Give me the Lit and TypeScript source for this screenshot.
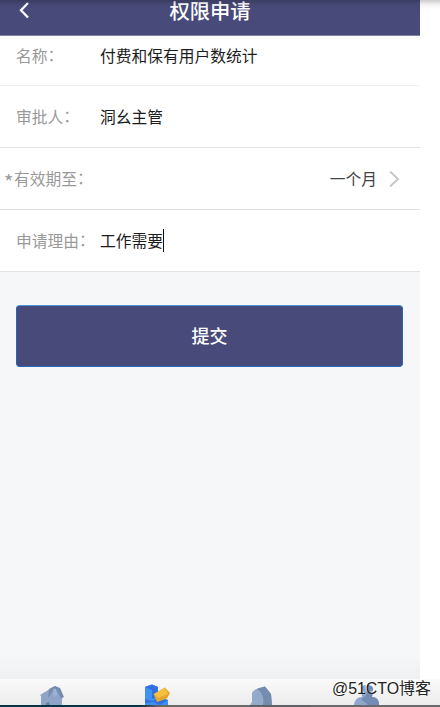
import { LitElement, html, css } from "lit";
import { customElement } from "lit/decorators.js";

@customElement("app-root")
export class AppRoot extends LitElement {
  static styles = css`
    :host {
      display: flex;
      flex-direction: column;
      position: relative;
      width: 440px;
      height: 707px;
      overflow: hidden;
      background: #fff;
      font-family: "Noto Sans CJK SC", sans-serif;
      font-size: 15.75px;
      line-height: 24px;
      color: #1c1c1c;
    }
    * { box-sizing: border-box; }
    svg { display: block; }
    .shade {
      position: absolute;
      inset: 0 0 auto 0;
      height: 10px;
      background: linear-gradient(rgba(0, 0, 0, 0.2), rgba(0, 0, 0, 0.04) 50%, transparent);
    }
    .screen {
      width: 420px;
      height: 679px;
      background: linear-gradient(#f5f7f9 655px, #eef0f2);
    }
    .header {
      display: grid;
      grid-template-columns: 50px 1fr 50px;
      height: 36px;
      background: #484b79;
      border-bottom: 1px solid #8385a5;
      color: #fff;
    }
    .back { margin: 1px 0 0 18px; }
    .title {
      text-align: center;
      font-size: 20.3px;
      font-weight: 500;
      line-height: 20px;
      white-space: nowrap;
    }
    .row {
      display: flex;
      align-items: center;
      height: 62px;
      padding: 0 20px 0 16px;
      border-bottom: 1px solid #e3e3e3;
      background: #fff;
      white-space: nowrap;
    }
    .first { height: 50px; padding-bottom: 10px; border-color: #f0f0f0; }
    .label { display: flex; width: 84px; color: #999; }
    .colon { margin-top: -1px; }
    .required { margin-left: -12px; width: 96px; }
    .star { width: 10px; font-size: 20px; line-height: 30px; height: 24px; }
    .value { display: flex; align-items: center; }
    .caret { width: 1px; height: 23px; background: #111; }
    .choice { margin-left: auto; color: #444; }
    .arrow { margin-left: 11px; }
    .submit {
      display: block;
      width: 387px;
      height: 62px;
      margin: 33px 0 0 16px;
      padding: 0 0 2px;
      border: 1px solid #2467b8;
      border-top-color: #4d94d8;
      border-radius: 4px;
      background: #484b79;
      color: #fff;
      font: 500 18px/26px "Noto Sans CJK SC", sans-serif;
    }
    .tabs {
      display: grid;
      grid-template-columns: repeat(4, 105px) 20px;
      height: 26px;
      background: linear-gradient(#fafafa, #ececec);
    }
    .tabs svg { width: 105px; height: 26px; }
    .edge {
      height: 2px;
      background: linear-gradient(90deg, #063247 0 140px, #45525a 152px, #69696b 160px 250px, #606164 250px 310px, #69696b 310px);
    }
    .mark {
      position: absolute;
      left: 332px;
      top: 677px;
      font-family: "Liberation Sans", "Noto Sans CJK SC", sans-serif;
      font-size: 15.9px;
      line-height: 24px;
      color: #222;
      white-space: nowrap;
      text-shadow: -1px -1px 0 #fff;
    }
  `;

  render() {
    return html`
      <div class="screen">
        <div class="header">
          <svg class="back" width="14" height="20" viewBox="0 0 14 20"><path d="M10 2 3 9.3 10 16.5" fill="none" stroke="#fff" stroke-width="2.3"/></svg>
          <div class="title">权限申请</div>
        </div>
        <div class="row first"><span class="label">名称<span class="colon">：</span></span><span class="value">付费和保有用户数统计</span></div>
        <div class="row"><span class="label">审批人<span class="colon">：</span></span><span class="value">洞幺主管</span></div>
        <div class="row">
          <span class="label required"><span class="star">*</span>有效期至<span class="colon">：</span></span><span class="choice">一个月</span>
          <svg class="arrow" width="12" height="18" viewBox="0 0 12 18"><path d="M2 1.5 10 9 2 16.5" fill="none" stroke="#c7c7cc" stroke-width="2"/></svg>
        </div>
        <div class="row"><span class="label">申请理由<span class="colon">：</span></span><span class="value">工作需要<i class="caret"></i></span></div>
        <button class="submit">提交</button>
      </div>
      <div class="tabs">
        <svg viewBox="0 0 105 26">
          <path d="M40 16 55 7 63 18 62 20V26H41V17Z" fill="#8fa5c8"/>
          <path d="M49 10 55 7 60 9 64 18 61 19 55 9 48 19Z" fill="#748bad"/>
          <path d="M53 10h3l1 6-3 2Z" fill="#9bb2d3"/>
          <path d="M46 26v-2l3-1 1 3Z" fill="#6880a5"/>
        </svg>
        <svg viewBox="105 0 105 26">
          <path d="M145 8 152 5.5 158 8V18L168 21V26H145Z" fill="#3f91f2"/>
          <path d="M145 8 152 5.5 158 8 152 11ZM152 11 158 8V18L152 20ZM145 20l7 2 7-3 9 2-8 5-7-3-8 1Z" fill="#3070df"/>
          <path d="M153.5 15 165 8.5 170 14 167 19.5 157 23Z" fill="#e3a82d"/>
          <path d="M154 15 165 8.5 168 15 158 19Z" fill="#f5bf42"/>
        </svg>
        <svg viewBox="210 0 105 26">
          <path d="M250 26 252 23V14Q253 10 265 7.5L271 15 272 26Z" fill="#93aacb"/>
          <path d="M257 10 265 7.5 271 15 272 26H263Q265 15 257 10Z" fill="#748daf"/>
        </svg>
        <svg viewBox="315 0 105 26">
          <path d="M354 26Q355 18 362 18L361 11Q360 6 367 6 374 6 373 12L372 18Q379 18 379 26Z" fill="#8fa7cc"/>
          <path d="M367 6Q374 6 373 12L372 18Q379 18 379 26H368L361 20Q369 17 367 6Z" fill="#728cb6"/>
        </svg>
      </div>
      <div class="edge"></div>
      <div class="shade"></div>
      <div class="mark">@51CTO博客</div>
    `;
  }
}
